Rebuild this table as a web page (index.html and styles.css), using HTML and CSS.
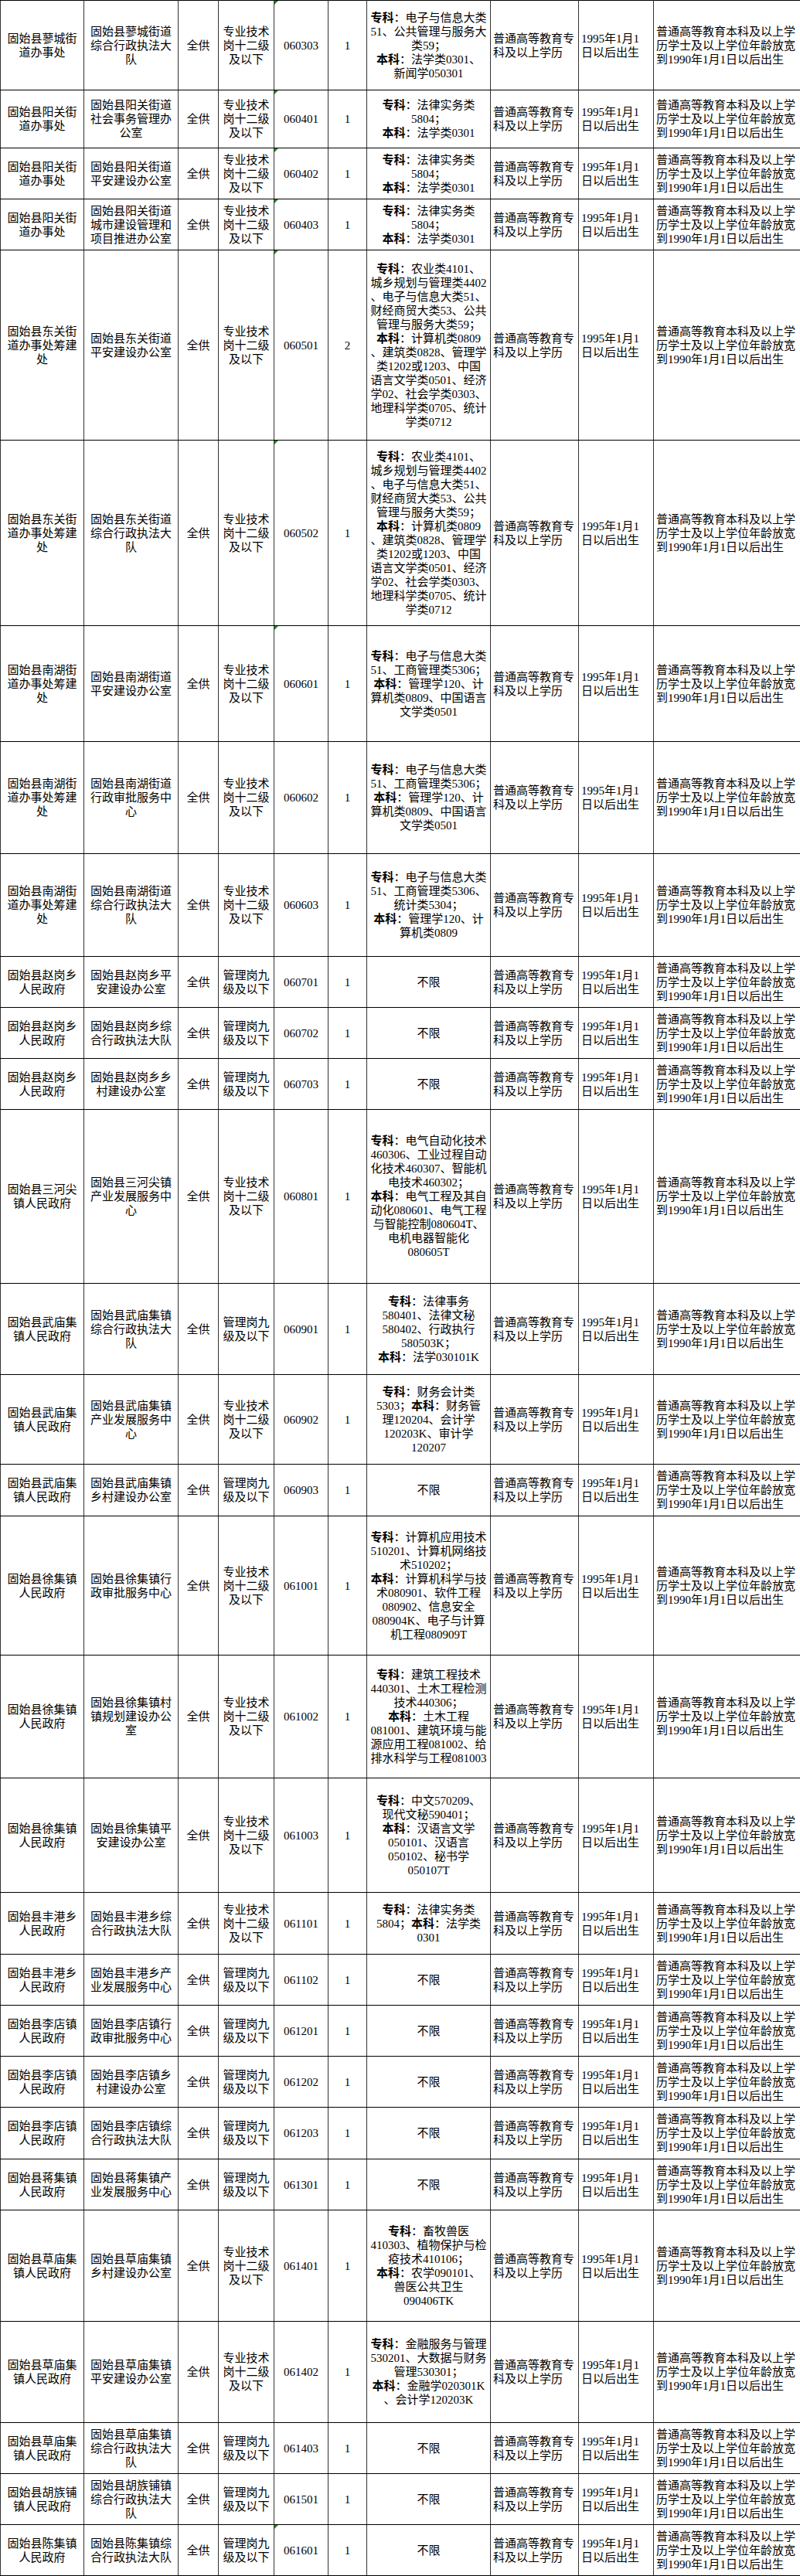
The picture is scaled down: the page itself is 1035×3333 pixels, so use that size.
FILE: index.html
```html
<!DOCTYPE html>
<html lang="zh-CN">
<head>
<meta charset="utf-8">
<title>岗位表</title>
<link rel="stylesheet" href="styles.css">
</head>
<body>
<table class="grid">
<colgroup>
<col class="w1"><col class="w2"><col class="w3"><col class="w4"><col class="w5"><col class="w6"><col class="w7"><col class="w8"><col class="w9"><col class="w10">
</colgroup>
<tbody>
<tr class="h116">
<td>固始县蓼城街<br>道办事处</td><td>固始县蓼城街道<br>综合行政执法大<br>队</td><td>全供</td><td>专业技术<br>岗十二级<br>及以下</td><td class="flag">060303</td><td>1</td>
<td><b>专科</b>：电子与信息大类<br>51、公共管理与服务大<br>类59；<br><b>本科</b>：法学类0301、<br>新闻学050301</td>
<td>普通高等教育专<br>科及以上学历</td><td>1995年1月1<br>日以后出生</td><td>普通高等教育本科及以上学<br>历学士及以上学位年龄放宽<br>到1990年1月1日以后出生</td>
</tr>
<tr class="h75">
<td>固始县阳关街<br>道办事处</td><td>固始县阳关街道<br>社会事务管理办<br>公室</td><td>全供</td><td>专业技术<br>岗十二级<br>及以下</td><td class="flag">060401</td><td>1</td>
<td><b>专科</b>：法律实务类<br>5804；<br><b>本科</b>：法学类0301</td>
<td>普通高等教育专<br>科及以上学历</td><td>1995年1月1<br>日以后出生</td><td>普通高等教育本科及以上学<br>历学士及以上学位年龄放宽<br>到1990年1月1日以后出生</td>
</tr>
<tr class="h66">
<td>固始县阳关街<br>道办事处</td><td>固始县阳关街道<br>平安建设办公室</td><td>全供</td><td>专业技术<br>岗十二级<br>及以下</td><td class="flag">060402</td><td>1</td>
<td><b>专科</b>：法律实务类<br>5804；<br><b>本科</b>：法学类0301</td>
<td>普通高等教育专<br>科及以上学历</td><td>1995年1月1<br>日以后出生</td><td>普通高等教育本科及以上学<br>历学士及以上学位年龄放宽<br>到1990年1月1日以后出生</td>
</tr>
<tr class="h66">
<td>固始县阳关街<br>道办事处</td><td>固始县阳关街道<br>城市建设管理和<br>项目推进办公室</td><td>全供</td><td>专业技术<br>岗十二级<br>及以下</td><td class="flag">060403</td><td>1</td>
<td><b>专科</b>：法律实务类<br>5804；<br><b>本科</b>：法学类0301</td>
<td>普通高等教育专<br>科及以上学历</td><td>1995年1月1<br>日以后出生</td><td>普通高等教育本科及以上学<br>历学士及以上学位年龄放宽<br>到1990年1月1日以后出生</td>
</tr>
<tr class="h246">
<td>固始县东关街<br>道办事处筹建<br>处</td><td>固始县东关街道<br>平安建设办公室</td><td>全供</td><td>专业技术<br>岗十二级<br>及以下</td><td class="flag">060501</td><td>2</td>
<td><b>专科</b>：农业类4101、<br>城乡规划与管理类4402<br>、电子与信息大类51、<br>财经商贸大类53、公共<br>管理与服务大类59；<br><b>本科</b>：计算机类0809<br>、建筑类0828、管理学<br>类1202或1203、中国<br>语言文学类0501、经济<br>学02、社会学类0303、<br>地理科学类0705、统计<br>学类0712</td>
<td>普通高等教育专<br>科及以上学历</td><td>1995年1月1<br>日以后出生</td><td>普通高等教育本科及以上学<br>历学士及以上学位年龄放宽<br>到1990年1月1日以后出生</td>
</tr>
<tr class="h240">
<td>固始县东关街<br>道办事处筹建<br>处</td><td>固始县东关街道<br>综合行政执法大<br>队</td><td>全供</td><td>专业技术<br>岗十二级<br>及以下</td><td class="flag">060502</td><td>1</td>
<td><b>专科</b>：农业类4101、<br>城乡规划与管理类4402<br>、电子与信息大类51、<br>财经商贸大类53、公共<br>管理与服务大类59；<br><b>本科</b>：计算机类0809<br>、建筑类0828、管理学<br>类1202或1203、中国<br>语言文学类0501、经济<br>学02、社会学类0303、<br>地理科学类0705、统计<br>学类0712</td>
<td>普通高等教育专<br>科及以上学历</td><td>1995年1月1<br>日以后出生</td><td>普通高等教育本科及以上学<br>历学士及以上学位年龄放宽<br>到1990年1月1日以后出生</td>
</tr>
<tr class="h150">
<td>固始县南湖街<br>道办事处筹建<br>处</td><td>固始县南湖街道<br>平安建设办公室</td><td>全供</td><td>专业技术<br>岗十二级<br>及以下</td><td class="flag">060601</td><td>1</td>
<td><b>专科</b>：电子与信息大类<br>51、工商管理类5306；<br><b>本科</b>：管理学120、计<br>算机类0809、中国语言<br>文学类0501</td>
<td>普通高等教育专<br>科及以上学历</td><td>1995年1月1<br>日以后出生</td><td>普通高等教育本科及以上学<br>历学士及以上学位年龄放宽<br>到1990年1月1日以后出生</td>
</tr>
<tr class="h145">
<td>固始县南湖街<br>道办事处筹建<br>处</td><td>固始县南湖街道<br>行政审批服务中<br>心</td><td>全供</td><td>专业技术<br>岗十二级<br>及以下</td><td>060602</td><td>1</td>
<td><b>专科</b>：电子与信息大类<br>51、工商管理类5306；<br><b>本科</b>：管理学120、计<br>算机类0809、中国语言<br>文学类0501</td>
<td>普通高等教育专<br>科及以上学历</td><td>1995年1月1<br>日以后出生</td><td>普通高等教育本科及以上学<br>历学士及以上学位年龄放宽<br>到1990年1月1日以后出生</td>
</tr>
<tr class="h133">
<td>固始县南湖街<br>道办事处筹建<br>处</td><td>固始县南湖街道<br>综合行政执法大<br>队</td><td>全供</td><td>专业技术<br>岗十二级<br>及以下</td><td>060603</td><td>1</td>
<td><b>专科</b>：电子与信息大类<br>51、工商管理类5306、<br>统计类5304；<br><b>本科</b>：管理学120、计<br>算机类0809</td>
<td>普通高等教育专<br>科及以上学历</td><td>1995年1月1<br>日以后出生</td><td>普通高等教育本科及以上学<br>历学士及以上学位年龄放宽<br>到1990年1月1日以后出生</td>
</tr>
<tr class="h66">
<td>固始县赵岗乡<br>人民政府</td><td>固始县赵岗乡平<br>安建设办公室</td><td>全供</td><td>管理岗九<br>级及以下</td><td>060701</td><td>1</td>
<td>不限</td>
<td>普通高等教育专<br>科及以上学历</td><td>1995年1月1<br>日以后出生</td><td>普通高等教育本科及以上学<br>历学士及以上学位年龄放宽<br>到1990年1月1日以后出生</td>
</tr>
<tr class="h66">
<td>固始县赵岗乡<br>人民政府</td><td>固始县赵岗乡综<br>合行政执法大队</td><td>全供</td><td>管理岗九<br>级及以下</td><td>060702</td><td>1</td>
<td>不限</td>
<td>普通高等教育专<br>科及以上学历</td><td>1995年1月1<br>日以后出生</td><td>普通高等教育本科及以上学<br>历学士及以上学位年龄放宽<br>到1990年1月1日以后出生</td>
</tr>
<tr class="h66">
<td>固始县赵岗乡<br>人民政府</td><td>固始县赵岗乡乡<br>村建设办公室</td><td>全供</td><td>管理岗九<br>级及以下</td><td>060703</td><td>1</td>
<td>不限</td>
<td>普通高等教育专<br>科及以上学历</td><td>1995年1月1<br>日以后出生</td><td>普通高等教育本科及以上学<br>历学士及以上学位年龄放宽<br>到1990年1月1日以后出生</td>
</tr>
<tr class="h225">
<td>固始县三河尖<br>镇人民政府</td><td>固始县三河尖镇<br>产业发展服务中<br>心</td><td>全供</td><td>专业技术<br>岗十二级<br>及以下</td><td>060801</td><td>1</td>
<td><b>专科</b>：电气自动化技术<br>460306、工业过程自动<br>化技术460307、智能机<br>电技术460302；<br><b>本科</b>：电气工程及其自<br>动化080601、电气工程<br>与智能控制080604T、<br>电机电器智能化<br>080605T</td>
<td>普通高等教育专<br>科及以上学历</td><td>1995年1月1<br>日以后出生</td><td>普通高等教育本科及以上学<br>历学士及以上学位年龄放宽<br>到1990年1月1日以后出生</td>
</tr>
<tr class="h118">
<td>固始县武庙集<br>镇人民政府</td><td>固始县武庙集镇<br>综合行政执法大<br>队</td><td>全供</td><td>管理岗九<br>级及以下</td><td>060901</td><td>1</td>
<td><b>专科</b>：法律事务<br>580401、法律文秘<br>580402、行政执行<br>580503K；<br><b>本科</b>：法学030101K</td>
<td>普通高等教育专<br>科及以上学历</td><td>1995年1月1<br>日以后出生</td><td>普通高等教育本科及以上学<br>历学士及以上学位年龄放宽<br>到1990年1月1日以后出生</td>
</tr>
<tr class="h116">
<td>固始县武庙集<br>镇人民政府</td><td>固始县武庙集镇<br>产业发展服务中<br>心</td><td>全供</td><td>专业技术<br>岗十二级<br>及以下</td><td>060902</td><td>1</td>
<td><b>专科</b>：财务会计类<br>5303；<b>本科</b>：财务管<br>理120204、会计学<br>120203K、审计学<br>120207</td>
<td>普通高等教育专<br>科及以上学历</td><td>1995年1月1<br>日以后出生</td><td>普通高等教育本科及以上学<br>历学士及以上学位年龄放宽<br>到1990年1月1日以后出生</td>
</tr>
<tr class="h67">
<td>固始县武庙集<br>镇人民政府</td><td>固始县武庙集镇<br>乡村建设办公室</td><td>全供</td><td>管理岗九<br>级及以下</td><td>060903</td><td>1</td>
<td>不限</td>
<td>普通高等教育专<br>科及以上学历</td><td>1995年1月1<br>日以后出生</td><td>普通高等教育本科及以上学<br>历学士及以上学位年龄放宽<br>到1990年1月1日以后出生</td>
</tr>
<tr class="h180">
<td>固始县徐集镇<br>人民政府</td><td>固始县徐集镇行<br>政审批服务中心</td><td>全供</td><td>专业技术<br>岗十二级<br>及以下</td><td>061001</td><td>1</td>
<td><b>专科</b>：计算机应用技术<br>510201、计算机网络技<br>术510202；<br><b>本科</b>：计算机科学与技<br>术080901、软件工程<br>080902、信息安全<br>080904K、电子与计算<br>机工程080909T</td>
<td>普通高等教育专<br>科及以上学历</td><td>1995年1月1<br>日以后出生</td><td>普通高等教育本科及以上学<br>历学士及以上学位年龄放宽<br>到1990年1月1日以后出生</td>
</tr>
<tr class="h159">
<td>固始县徐集镇<br>人民政府</td><td>固始县徐集镇村<br>镇规划建设办公<br>室</td><td>全供</td><td>专业技术<br>岗十二级<br>及以下</td><td>061002</td><td>1</td>
<td><b>专科</b>：建筑工程技术<br>440301、土木工程检测<br>技术440306；<br><b>本科</b>：土木工程<br>081001、建筑环境与能<br>源应用工程081002、给<br>排水科学与工程081003</td>
<td>普通高等教育专<br>科及以上学历</td><td>1995年1月1<br>日以后出生</td><td>普通高等教育本科及以上学<br>历学士及以上学位年龄放宽<br>到1990年1月1日以后出生</td>
</tr>
<tr class="h148">
<td>固始县徐集镇<br>人民政府</td><td>固始县徐集镇平<br>安建设办公室</td><td>全供</td><td>专业技术<br>岗十二级<br>及以下</td><td>061003</td><td>1</td>
<td><b>专科</b>：中文570209、<br>现代文秘590401；<br><b>本科</b>：汉语言文学<br>050101、汉语言<br>050102、秘书学<br>050107T</td>
<td>普通高等教育专<br>科及以上学历</td><td>1995年1月1<br>日以后出生</td><td>普通高等教育本科及以上学<br>历学士及以上学位年龄放宽<br>到1990年1月1日以后出生</td>
</tr>
<tr class="h80">
<td>固始县丰港乡<br>人民政府</td><td>固始县丰港乡综<br>合行政执法大队</td><td>全供</td><td>专业技术<br>岗十二级<br>及以下</td><td>061101</td><td>1</td>
<td><b>专科</b>：法律实务类<br>5804；<b>本科</b>：法学类<br>0301</td>
<td>普通高等教育专<br>科及以上学历</td><td>1995年1月1<br>日以后出生</td><td>普通高等教育本科及以上学<br>历学士及以上学位年龄放宽<br>到1990年1月1日以后出生</td>
</tr>
<tr class="h66">
<td>固始县丰港乡<br>人民政府</td><td>固始县丰港乡产<br>业发展服务中心</td><td>全供</td><td>管理岗九<br>级及以下</td><td>061102</td><td>1</td>
<td>不限</td>
<td>普通高等教育专<br>科及以上学历</td><td>1995年1月1<br>日以后出生</td><td>普通高等教育本科及以上学<br>历学士及以上学位年龄放宽<br>到1990年1月1日以后出生</td>
</tr>
<tr class="h66">
<td>固始县李店镇<br>人民政府</td><td>固始县李店镇行<br>政审批服务中心</td><td>全供</td><td>管理岗九<br>级及以下</td><td>061201</td><td>1</td>
<td>不限</td>
<td>普通高等教育专<br>科及以上学历</td><td>1995年1月1<br>日以后出生</td><td>普通高等教育本科及以上学<br>历学士及以上学位年龄放宽<br>到1990年1月1日以后出生</td>
</tr>
<tr class="h66">
<td>固始县李店镇<br>人民政府</td><td>固始县李店镇乡<br>村建设办公室</td><td>全供</td><td>管理岗九<br>级及以下</td><td>061202</td><td>1</td>
<td>不限</td>
<td>普通高等教育专<br>科及以上学历</td><td>1995年1月1<br>日以后出生</td><td>普通高等教育本科及以上学<br>历学士及以上学位年龄放宽<br>到1990年1月1日以后出生</td>
</tr>
<tr class="h67">
<td>固始县李店镇<br>人民政府</td><td>固始县李店镇综<br>合行政执法大队</td><td>全供</td><td>管理岗九<br>级及以下</td><td>061203</td><td>1</td>
<td>不限</td>
<td>普通高等教育专<br>科及以上学历</td><td>1995年1月1<br>日以后出生</td><td>普通高等教育本科及以上学<br>历学士及以上学位年龄放宽<br>到1990年1月1日以后出生</td>
</tr>
<tr class="h66">
<td>固始县蒋集镇<br>人民政府</td><td>固始县蒋集镇产<br>业发展服务中心</td><td>全供</td><td>管理岗九<br>级及以下</td><td>061301</td><td>1</td>
<td>不限</td>
<td>普通高等教育专<br>科及以上学历</td><td>1995年1月1<br>日以后出生</td><td>普通高等教育本科及以上学<br>历学士及以上学位年龄放宽<br>到1990年1月1日以后出生</td>
</tr>
<tr class="h144">
<td>固始县草庙集<br>镇人民政府</td><td>固始县草庙集镇<br>乡村建设办公室</td><td>全供</td><td>专业技术<br>岗十二级<br>及以下</td><td>061401</td><td>1</td>
<td><b>专科</b>：畜牧兽医<br>410303、植物保护与检<br>疫技术410106；<br><b>本科</b>：农学090101、<br>兽医公共卫生<br>090406TK</td>
<td>普通高等教育专<br>科及以上学历</td><td>1995年1月1<br>日以后出生</td><td>普通高等教育本科及以上学<br>历学士及以上学位年龄放宽<br>到1990年1月1日以后出生</td>
</tr>
<tr class="h131">
<td>固始县草庙集<br>镇人民政府</td><td>固始县草庙集镇<br>平安建设办公室</td><td>全供</td><td>专业技术<br>岗十二级<br>及以下</td><td>061402</td><td>1</td>
<td><b>专科</b>：金融服务与管理<br>530201、大数据与财务<br>管理530301；<br><b>本科</b>：金融学020301K<br>、会计学120203K</td>
<td>普通高等教育专<br>科及以上学历</td><td>1995年1月1<br>日以后出生</td><td>普通高等教育本科及以上学<br>历学士及以上学位年龄放宽<br>到1990年1月1日以后出生</td>
</tr>
<tr class="h66">
<td>固始县草庙集<br>镇人民政府</td><td>固始县草庙集镇<br>综合行政执法大<br>队</td><td>全供</td><td>管理岗九<br>级及以下</td><td>061403</td><td>1</td>
<td>不限</td>
<td>普通高等教育专<br>科及以上学历</td><td>1995年1月1<br>日以后出生</td><td>普通高等教育本科及以上学<br>历学士及以上学位年龄放宽<br>到1990年1月1日以后出生</td>
</tr>
<tr class="h66">
<td>固始县胡族铺<br>镇人民政府</td><td>固始县胡族铺镇<br>综合行政执法大<br>队</td><td>全供</td><td>管理岗九<br>级及以下</td><td>061501</td><td>1</td>
<td>不限</td>
<td>普通高等教育专<br>科及以上学历</td><td>1995年1月1<br>日以后出生</td><td>普通高等教育本科及以上学<br>历学士及以上学位年龄放宽<br>到1990年1月1日以后出生</td>
</tr>
<tr class="h66">
<td>固始县陈集镇<br>人民政府</td><td>固始县陈集镇综<br>合行政执法大队</td><td>全供</td><td>管理岗九<br>级及以下</td><td class="flag">061601</td><td>1</td>
<td>不限</td>
<td>普通高等教育专<br>科及以上学历</td><td>1995年1月1<br>日以后出生</td><td>普通高等教育本科及以上学<br>历学士及以上学位年龄放宽<br>到1990年1月1日以后出生</td>
</tr>
</tbody>
</table>
</body>
</html>
```

FILE: styles.css
```css
html, body {
  margin: 0;
  padding: 0;
  background: #ffffff;
}

body {
  width: 1035px;
}

.grid {
  border-collapse: collapse;
  table-layout: fixed;
  width: 1035px;
  font-family: "Liberation Serif", "Noto Sans CJK SC", serif;
  font-size: 15px;
  line-height: 18px;
  color: #000000;
}

.w1 { width: 108px; }
.w2 { width: 122px; }
.w3 { width: 52px; }
.w4 { width: 72px; }
.w5 { width: 70px; }
.w6 { width: 50px; }
.w7 { width: 160px; }
.w8 { width: 114px; }
.w9 { width: 97px; }
.w10 { width: 190px; }

.grid td {
  border-top: 1px solid #000000;
  border-bottom: 1px solid #000000;
  border-left: 1px solid #333333;
  border-right: 1px solid #333333;
  padding: 0 3px;
  vertical-align: middle;
  text-align: center;
  white-space: nowrap;
  overflow: hidden;
}

.grid td:nth-child(7) {
  padding: 0 1px;
}

.grid td:nth-child(8),
.grid td:nth-child(9),
.grid td:nth-child(10) {
  text-align: left;
}

.grid b {
  font-weight: 700;
}

.flag {
  position: relative;
}

.flag::before {
  content: "";
  position: absolute;
  left: 0;
  top: 0;
  width: 0;
  height: 0;
  border-top: 5px solid #1a8a1a;
  border-right: 5px solid transparent;
}

.h66 { height: 66px; }
.h67 { height: 67px; }
.h75 { height: 75px; }
.h80 { height: 80px; }
.h116 { height: 116px; }
.h118 { height: 118px; }
.h131 { height: 131px; }
.h133 { height: 133px; }
.h144 { height: 144px; }
.h145 { height: 145px; }
.h148 { height: 148px; }
.h150 { height: 150px; }
.h159 { height: 159px; }
.h180 { height: 180px; }
.h225 { height: 225px; }
.h240 { height: 240px; }
.h246 { height: 246px; }
```
